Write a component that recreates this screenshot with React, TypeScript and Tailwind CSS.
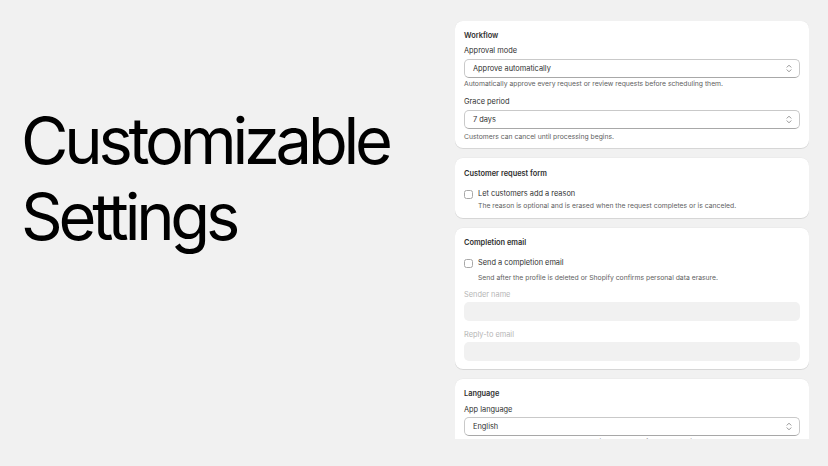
import React from 'react';

// Up/down caret used on the select controls
const SelectCaret = () => (
  <svg width="6" height="9" viewBox="0 0 6 9" fill="none" className="shrink-0">
    <path d="M1 3.2L3 1.2L5 3.2" stroke="#8a8a8a" strokeWidth="0.9" strokeLinecap="round" strokeLinejoin="round" />
    <path d="M1 5.8L3 7.8L5 5.8" stroke="#8a8a8a" strokeWidth="0.9" strokeLinecap="round" strokeLinejoin="round" />
  </svg>
);

const Select = ({ value, className = '' }: { value: string; className?: string }) => (
  <div
    className={`h-[19px] flex items-center justify-between pl-[8px] pr-[7px] bg-white border border-[#c9c9c9] border-b-[#a8a8a8] rounded-[5px] text-[7.4px] text-[#303030] ${className}`}
  >
    <span>{value}</span>
    <SelectCaret />
  </div>
);

const Card = ({ children, className = '' }: { children: React.ReactNode; className?: string }) => (
  <div className={`bg-white rounded-[8px] px-[9px] shadow-[0_1px_0_rgba(0,0,0,0.09),0_0_0_0.5px_rgba(0,0,0,0.04)] ${className}`}>
    {children}
  </div>
);

const Title = ({ children }: { children: React.ReactNode }) => (
  <div className="text-[7.4px] leading-[12px] font-semibold text-[#303030]">{children}</div>
);

const Label = ({ children, className = '' }: { children: React.ReactNode; className?: string }) => (
  <div className={`text-[7.4px] leading-[12px] text-[#303030] ${className}`}>{children}</div>
);

const Help = ({ children, className = '' }: { children: React.ReactNode; className?: string }) => (
  <div className={`text-[6.8px] leading-[12px] text-[#616161] ${className}`}>{children}</div>
);

const Checkbox = ({ label, className = '' }: { label: string; className?: string }) => (
  <div className={`flex items-center gap-[5px] h-[12px] ${className}`}>
    <span className="w-[9px] h-[9px] rounded-[2.5px] border border-[#a8a8a8] bg-white" />
    <span className="text-[7.4px] text-[#303030]">{label}</span>
  </div>
);

export default function App() {
  return (
    <div className="w-[828px] h-[466px] bg-[#f1f1f1] flex font-['Inter',sans-serif] overflow-hidden">
      <div className="flex-1 pl-[21px] pt-[103px]">
        <h1 className="text-[65px] leading-[76px] font-normal tracking-[-0.065em] text-black">
          Customizable
          <br />
          Settings
        </h1>
      </div>

      <div className="w-[354px] mr-[19px] mt-[21px] h-[418px] overflow-hidden flex flex-col gap-[10px]">
        <Card className="pt-[9px] pb-[5px]">
          <Title>Workflow</Title>
          <Label className="mt-[3px]">Approval mode</Label>
          <Select value="Approve automatically" className="mt-[2px]" />
          <Help>Automatically approve every request or review requests before scheduling them.</Help>
          <Label className="mt-[6px]">Grace period</Label>
          <Select value="7 days" className="mt-[2px]" />
          <Help className="mt-[2px]">Customers can cancel until processing begins.</Help>
        </Card>

        <Card className="pt-[10px] pb-[6px]">
          <Title>Customer request form</Title>
          <Checkbox label="Let customers add a reason" className="mt-[8px]" />
          <Help className="pl-[14px]">
            The reason is optional and is erased when the request completes or is canceled.
          </Help>
        </Card>

        <Card className="pt-[9px] pb-[8px]">
          <Title>Completion email</Title>
          <Checkbox label="Send a completion email" className="mt-[8px]" />
          <Help className="pl-[14px] mt-[3px]">
            Send after the profile is deleted or Shopify confirms personal data erasure.
          </Help>
          <Label className="mt-[5px] text-[#b5b5b5]">Sender name</Label>
          <div className="mt-[1px] h-[19px] rounded-[5px] bg-[#f1f1f1]" />
          <Label className="mt-[8px] text-[#b5b5b5]">Reply-to email</Label>
          <div className="mt-[1px] h-[19px] rounded-[5px] bg-[#f1f1f1]" />
        </Card>

        <Card className="pt-[9px] pb-[9px]">
          <Title>Language</Title>
          <Label className="mt-[4px]">App language</Label>
          <Select value="English" className="mt-[1px]" />
          <Help>Choose the language your customers see in the request form and emails.</Help>
        </Card>
      </div>
    </div>
  );
}
